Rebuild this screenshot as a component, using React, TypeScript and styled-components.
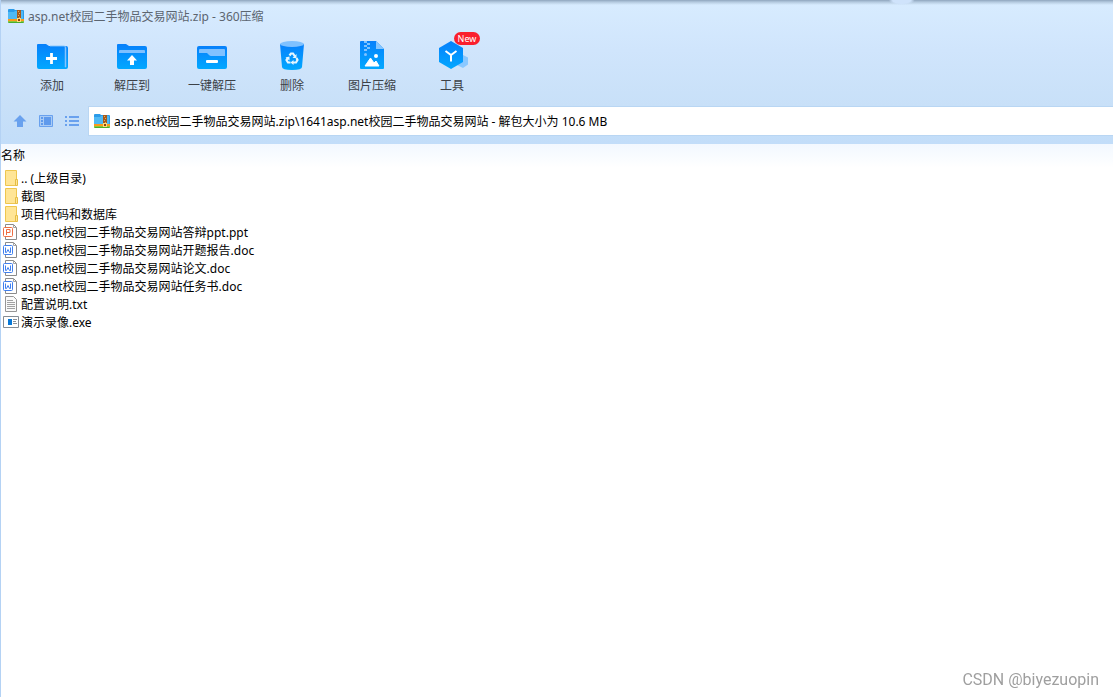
import React from 'react';
import styled, { createGlobalStyle } from 'styled-components';

const Global = createGlobalStyle`
  *, *::before, *::after { box-sizing: border-box; }
  html, body { margin: 0; padding: 0; background: #fff; }
  body, button, input, table {
    font-family: "Noto Sans", "Noto Sans CJK SC", sans-serif;
    font-size: 12px;
    line-height: 18px;
    color: #000;
  }
`;

const Window = styled.div`
  min-height: 100vh;
  display: flex;
  flex-direction: column;
  border-left: 1px solid #b4d2f4;
`;

const Chrome = styled.header`
  background:
    radial-gradient(ellipse 13px 5px at 81% 0, #cfe3fb 70%, rgba(207, 227, 251, 0)),
    linear-gradient(#8fa5bd 0, #b3c9de 2px, rgba(200, 222, 244, 0) 5px),
    linear-gradient(#d8ecff 0, #d0e5fc 50px, #c8e0f8 106px, #c2ddf9 144px);
`;

const TitleBar = styled.div`
  display: flex;
  align-items: center;
  gap: 4px;
  height: 32px;
  padding: 0 7px;
`;

const Title = styled.h1`
  margin: 0;
  padding-top: 2px;
  font-size: 12px;
  font-weight: 400;
  line-height: 18px;
  color: #5c6570;
`;

const Toolbar = styled.nav`
  display: flex;
  height: 75px;
  padding-left: 11px;
`;

const ToolButton = styled.button`
  position: relative;
  display: flex;
  flex-direction: column;
  align-items: center;
  gap: 5px;
  width: 80px;
  padding: 8px 0 0;
  border: 0;
  background: none;
  color: #3c4147;
  white-space: nowrap;
`;

const Badge = styled.span`
  position: absolute;
  top: 0;
  left: 42px;
  width: 26px;
  height: 13px;
  border-radius: 7px;
  background: #fa1f2d;
  color: #fff;
  font-size: 9px;
  line-height: 13px;
  text-align: center;
`;

const AddressBar = styled.div`
  display: flex;
  align-items: center;
  height: 37px;
  padding: 0 0 9px 11px;
  gap: 10px;
`;

const NavGroup = styled.div`
  display: flex;
  gap: 10px;
`;

const NavButton = styled.button`
  display: flex;
  width: 16px;
  height: 16px;
  padding: 0;
  border: 0;
  background: none;
`;

const Address = styled.label`
  flex: 1;
  display: flex;
  align-items: center;
  gap: 4px;
  height: 28px;
  margin-left: -1px;
  padding-left: 5px;
  background: #fff;
  box-shadow: 0 0 0 1px #b9d6f3;
`;

const AddressInput = styled.input`
  flex: 1;
  min-width: 0;
  padding: 2px 0 0;
  border: 0;
  outline: 0;
  background: none;
`;

const Listing = styled.main`
  flex: 1;
  background: linear-gradient(#f2f8ff 0, #fff 24px);
`;

const FileTable = styled.table`
  width: 100%;
  border-collapse: collapse;
`;

const NameHeader = styled.th`
  height: 25px;
  padding: 0 0 2px;
  font-weight: 400;
  text-align: left;
`;

const FileCell = styled.td`
  height: 18px;
  padding: 0 0 0 2px;
`;

const FileRow = styled.div`
  display: flex;
  align-items: center;
  gap: 2px;
  height: 18px;
`;

const FileName = styled.span`
  padding-top: 2px;
`;

const Watermark = styled.footer`
  position: fixed;
  right: 14px;
  bottom: 7px;
  font-family: Roboto, sans-serif;
  font-size: 16px;
  line-height: 20px;
  color: #9f9f9f;
`;

const ZipIcon = () => (
  <svg width="16" height="16" viewBox="0 0 16 16" aria-hidden="true">
    <path d="M0 2q0-1 1-1h5l1 1h8q1 0 1 1v8H0z" fill="#2b9be9" />
    <path d="M0 4h6l1-1h8v8H0z" fill="#4fb9f5" />
    <path d="M0 11h16v2H0z" fill="#fb9a1b" />
    <path d="M0 13h16v1H0z" fill="#8cc63c" />
    <path d="M0 14h16q0 1-1 1H1q-1 0-1-1z" fill="#4aae2c" />
    <path d="M9 2h4v9H9z" fill="#a55a1c" />
    <path d="M10 3h1v1h-1zM11 5h1v1h-1zM10 7h1v1h-1zM11 9h1v1h-1z" fill="#e8a75a" />
    <path d="M9 10h4v4H9z" fill="#ffd978" />
    <path d="M10 11h2v2h-2z" fill="#8b4413" />
  </svg>
);

const Blue = () => (
  <defs>
    <linearGradient id="blue" x1="0" y1="0" x2="0" y2="1">
      <stop offset="0" stopColor="#0780fb" />
      <stop offset="1" stopColor="#02a8ff" />
    </linearGradient>
  </defs>
);

const ToolSvg = ({ children }: { children: React.ReactNode }) => (
  <svg width="32" height="32" viewBox="0 0 32 32" aria-hidden="true">
    <Blue />
    {children}
  </svg>
);

const AddIcon = () => (
  <ToolSvg>
    <path d="M1 5q0-1 1-1h8l3 2h17q2 0 2 2v19q0 2-2 2H3q-2 0-2-2z" fill="url(#blue)" />
    <path d="M14 6h14q1 0 1 1v20h1V8q0-2-2-2z" fill="#85c4ff" stroke="#85c4ff" strokeWidth=".5" />
    <path d="M15.500 13v11M10 18.500h11" stroke="#fff" strokeWidth="2.800" />
  </ToolSvg>
);

const ExtractIcon = () => (
  <ToolSvg>
    <path d="M1 5q0-1 1-1h8l3 2h16q2 0 2 2v19q0 2-2 2H3q-2 0-2-2z" fill="url(#blue)" />
    <path d="M3 11q0-1 1-1h24q1 0 1 1v2H3z" fill="#7fc0ff" />
    <path d="M16 15l5 5.500h-3V25h-4v-4.500h-3z" fill="#fff" />
  </ToolSvg>
);

const QuickIcon = () => (
  <ToolSvg>
    <rect x="1" y="6" width="30" height="23" rx="2" fill="url(#blue)" />
    <path d="M3 10q0-1 1-1h24q1 0 1 1v6H15q-1 0-2-1l-2-2H3z" fill="#80c1ff" />
    <rect x="10" y="20" width="12" height="3" rx="1" fill="#fff" />
  </ToolSvg>
);

const DeleteIcon = () => (
  <ToolSvg>
    <path d="M4 4h24l-2 23q0 3-10 3T6 27z" fill="url(#blue)" />
    <ellipse cx="16" cy="4" rx="12" ry="3" fill="#7fc1ff" />
    <g fill="none" stroke="#e5f6ff" strokeWidth="2.200">
      <path d="M13.500 15.500l1.500-2h2l2 3" />
      <path d="M20.500 18l1 2-1.500 2.500h-3" />
      <path d="M14.500 22.500H12L10.500 20l1.500-2.500" />
    </g>
    <path d="M20.500 14v4h-4zM17.500 20v5l-3-2.500zM9.500 17.500l4-1v4z" fill="#e5f6ff" />
  </ToolSvg>
);

const ImageIcon = () => (
  <ToolSvg>
    <path d="M4 2q0-1 1-1h15l8 8v19q0 1-1 1H5q-1 0-1-1z" fill="url(#blue)" />
    <path d="M20 1l8 8h-8z" fill="#86c6ff" />
    <path d="M8 1h3v2H8zM11 3h3v2h-3zM8 5h3v2H8zM11 7h3v2h-3zM8 9h3v2H8z" fill="#80c2ff" />
    <circle cx="9.500" cy="14.500" r="1.500" fill="#80c2ff" />
    <circle cx="20" cy="16" r="2" fill="#fff" />
    <path d="M9 26l5.500-8 3.500 5 2-2 3 5z" fill="#fff" stroke="#fff" strokeLinejoin="round" />
  </ToolSvg>
);

const ToolsIcon = () => (
  <ToolSvg>
    <path d="M27 15l5 2.500v7L27 28l-6-3z" fill="#8ac8ff" />
    <path d="M15 1l12 7v14l-12 7-12-7V8z" fill="url(#blue)" />
    <path d="M9.500 11l5.500 4 5.500-4M15 15v6.500" fill="none" stroke="#fff" strokeWidth="2" />
  </ToolSvg>
);

const UpIcon = () => (
  <svg width="16" height="16" viewBox="0 0 16 16" aria-hidden="true">
    <path d="M8 2l6.500 6.500H11V14H5V8.500H1.500z" fill="#69a1ee" />
  </svg>
);

const ViewIcon = () => (
  <svg width="16" height="16" viewBox="0 0 16 16" aria-hidden="true">
    <path d="M1.500 2.500h13v11h-13z" fill="#a9cbf5" stroke="#69a1ee" />
    <path d="M6 4h7v8H6zM3 4h2v2H3zM3 7h2v2H3zM3 10h2v2H3z" fill="#5f9aec" />
  </svg>
);

const ListIcon = () => (
  <svg width="16" height="16" viewBox="0 0 16 16" aria-hidden="true">
    <path d="M1 3h2v2H1zM5 3h10v2H5zM1 7h2v2H1zM5 7h10v2H5zM1 11h2v2H1zM5 11h10v2H5z" fill="#69a1ee" />
  </svg>
);

type Kind = 'folder' | 'ppt' | 'doc' | 'txt' | 'exe';

const FileIcon = ({ kind }: { kind: Kind }) => (
  <svg width="16" height="16" viewBox="0 0 16 16" aria-hidden="true">
    {kind === 'folder' && (
      <>
        <path d="M2.500.5h11v15h-11z" fill="#ffe596" stroke="#eec64f" />
        <path d="M12.500 9.500h2v6h-2z" fill="#ffe596" stroke="#e5bd45" />
      </>
    )}
    {(kind === 'ppt' || kind === 'doc') && (
      <>
        <path d="M2.500 3V.5h8l3 3v12h-11V13" fill="#fff" stroke="#8b8b8b" />
        <path d="M10.500.5v3h3" fill="none" stroke="#a5a5a5" />
        <rect x=".5" y="3.500" width="9" height="9" rx="1" fill="#fff" stroke={kind === 'ppt' ? '#ee6d43' : '#3f7fee'} />
        {kind === 'ppt' ? (
          <path d="M3.500 11V5.500H7v3H3.500" fill="none" stroke="#ee6d43" />
        ) : (
          <path d="M2.500 5.500v5h1l1.500-3 1.500 3h1v-5" fill="none" stroke="#3f7fee" />
        )}
      </>
    )}
    {kind === 'txt' && (
      <>
        <path d="M2.500.5h8l3 3v12h-11z" fill="#fafafa" stroke="#969696" />
        <path d="M4 4.500h6M4 6.500h8M4 8.500h8M4 10.500h8M4 12.500h8" stroke="#a2a2a2" />
      </>
    )}
    {kind === 'exe' && (
      <>
        <path d="M.5 2.500h15v11H.5z" fill="#fff" stroke="#858c94" />
        <path d="M5 5h4v6H5z" fill="#0878d6" />
        <path d="M10 5.500h4M10 7.500h3M10 9.500h4" stroke="#8a9199" />
      </>
    )}
  </svg>
);

const tools = [
  { label: '添加', Icon: AddIcon },
  { label: '解压到', Icon: ExtractIcon },
  { label: '一键解压', Icon: QuickIcon },
  { label: '删除', Icon: DeleteIcon },
  { label: '图片压缩', Icon: ImageIcon },
  { label: '工具', Icon: ToolsIcon, badge: 'New' },
];

const files: { name: string; kind: Kind }[] = [
  { name: '.. (上级目录)', kind: 'folder' },
  { name: '截图', kind: 'folder' },
  { name: '项目代码和数据库', kind: 'folder' },
  { name: 'asp.net校园二手物品交易网站答辩ppt.ppt', kind: 'ppt' },
  { name: 'asp.net校园二手物品交易网站开题报告.doc', kind: 'doc' },
  { name: 'asp.net校园二手物品交易网站论文.doc', kind: 'doc' },
  { name: 'asp.net校园二手物品交易网站任务书.doc', kind: 'doc' },
  { name: '配置说明.txt', kind: 'txt' },
  { name: '演示录像.exe', kind: 'exe' },
];

export default function App() {
  return (
    <Window>
      <Global />
      <Chrome>
        <TitleBar>
          <ZipIcon />
          <Title>asp.net校园二手物品交易网站.zip - 360压缩</Title>
        </TitleBar>
        <Toolbar>
          {tools.map(({ label, Icon, badge }) => (
            <ToolButton key={label} type="button">
              <Icon />
              {label}
              {badge && <Badge>{badge}</Badge>}
            </ToolButton>
          ))}
        </Toolbar>
        <AddressBar>
          <NavGroup>
            <NavButton type="button" aria-label="Up"><UpIcon /></NavButton>
            <NavButton type="button" aria-label="Preview"><ViewIcon /></NavButton>
            <NavButton type="button" aria-label="List"><ListIcon /></NavButton>
          </NavGroup>
          <Address>
            <ZipIcon />
            <AddressInput
              aria-label="Path"
              defaultValue="asp.net校园二手物品交易网站.zip\1641asp.net校园二手物品交易网站 - 解包大小为 10.6 MB"
            />
          </Address>
        </AddressBar>
      </Chrome>
      <Listing>
        <FileTable>
          <thead>
            <tr><NameHeader scope="col">名称</NameHeader></tr>
          </thead>
          <tbody>
            {files.map(({ name, kind }) => (
              <tr key={name}>
                <FileCell>
                  <FileRow>
                    <FileIcon kind={kind} />
                    <FileName>{name}</FileName>
                  </FileRow>
                </FileCell>
              </tr>
            ))}
          </tbody>
        </FileTable>
      </Listing>
      <Watermark>CSDN @biyezuopin</Watermark>
    </Window>
  );
}
